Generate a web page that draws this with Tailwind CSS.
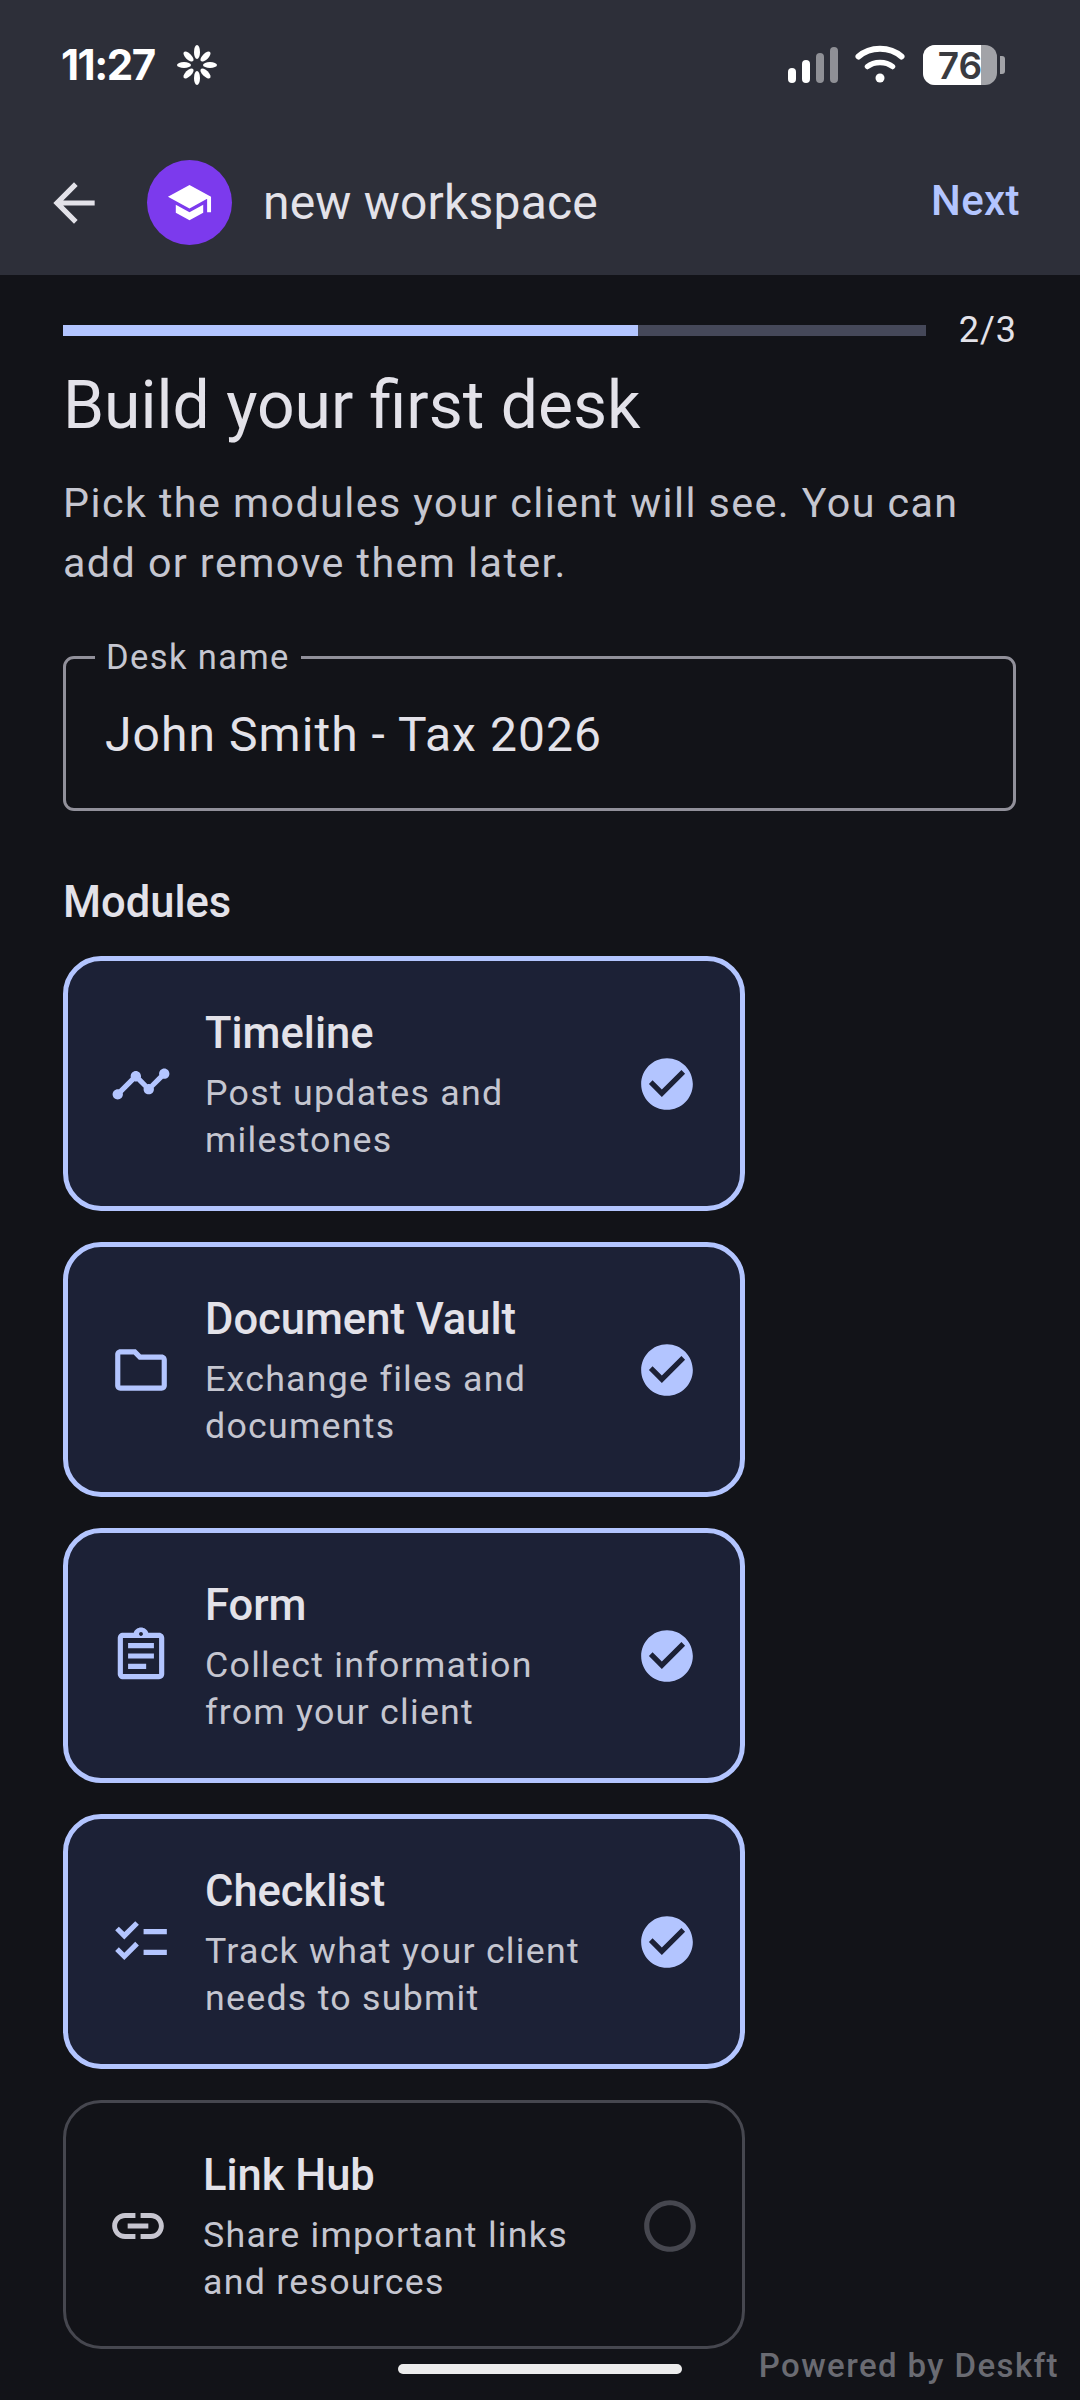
<!DOCTYPE html>
<html lang="en">
<head>
    <meta charset="UTF-8">
    <meta name="viewport" content="width=device-width, initial-scale=1.0">
    <title>new workspace</title>
    <script src="https://cdn.jsdelivr.net/npm/@tailwindcss/browser@4"></script>
</head>
<body class="bg-[#121318] font-['Roboto',sans-serif]">
<div class="relative w-[1080px] h-[2400px] overflow-hidden bg-[#121318] text-[#e3e2e9]">
    <!-- Header -->
    <header class="bg-[#2d2f39] h-[275px]">
        <div class="h-[130px] flex items-center justify-between pl-[61px] pr-[75px]">
            <div class="flex items-center gap-[22px]">
                <span class="font-['Inter',sans-serif] font-bold text-[42px] leading-none tracking-[-1.500px] text-white">11:27</span>
                <svg class="w-[40px] h-[40px]" viewBox="0 0 40 40" fill="#fff">
                    <ellipse cx="20" cy="7" rx="3" ry="7"/>
                    <ellipse cx="20" cy="33" rx="3" ry="7"/>
                    <ellipse cx="7" cy="20" rx="7" ry="3"/>
                    <ellipse cx="33" cy="20" rx="7" ry="3"/>
                    <ellipse cx="20" cy="8" rx="3" ry="6.500" transform="rotate(45 20 20)"/>
                    <ellipse cx="20" cy="32" rx="3" ry="6.500" transform="rotate(45 20 20)"/>
                    <ellipse cx="8" cy="20" rx="6.500" ry="3" transform="rotate(45 20 20)"/>
                    <ellipse cx="32" cy="20" rx="6.500" ry="3" transform="rotate(45 20 20)"/>
                </svg>
            </div>
            <div class="flex items-center">
                <svg class="w-[118px] h-[40px]" viewBox="0 0 118 40">
                    <rect x="0" y="23" width="8" height="15" rx="4" fill="#fff"/>
                    <rect x="14" y="15" width="8" height="23" rx="4" fill="#fff"/>
                    <rect x="28" y="8" width="8" height="30" rx="4" fill="#8f9096"/>
                    <rect x="42" y="2" width="8" height="36" rx="4" fill="#8f9096"/>
                    <path d="M70.500 11.500 C 82 1 102 1 113.500 11.500" fill="none" stroke="#fff" stroke-width="6" stroke-linecap="round"/>
                    <path d="M79.500 21.500 C 86 16 98 16 104.500 21.500" fill="none" stroke="#fff" stroke-width="5.500" stroke-linecap="round"/>
                    <circle cx="92" cy="33" r="4.500" fill="#fff"/>
                </svg>
                <div class="relative ml-[17px] w-[74px] h-[40px] rounded-[12px] bg-[#a2a3a8]">
                    <div class="absolute inset-y-0 left-0 w-[58px] rounded-l-[12px] bg-white"></div>
                    <span class="absolute inset-0 flex items-center justify-center font-['Inter',sans-serif] font-semibold text-[37px] leading-none text-[#3a3b40]">76</span>
                </div>
                <div class="ml-[3px] w-[5px] h-[18px] rounded-r-[3px] bg-[#a2a3a8]"></div>
            </div>
        </div>
        <div class="h-[145px] flex items-center pl-[43px] pr-[60px]">
            <svg class="w-[62px] h-[62px] shrink-0" viewBox="0 0 24 24" fill="#e3e2e9"><path d="M20 11H7.830l5.590-5.590L12 4l-8 8 8 8 1.410-1.410L7.830 13H20v-2z"/></svg>
            <div class="ml-[42px] w-[85px] h-[85px] rounded-full bg-[#7c3aed] flex items-center justify-center shrink-0">
                <svg class="w-[47px] h-[47px]" viewBox="0 0 24 24" fill="#fff"><path d="M5 13.180v4L12 21l7-3.820v-4L12 17l-7-3.820zM12 3L1 9l11 6 9-4.910V17h2V9L12 3z"/></svg>
            </div>
            <h1 class="ml-[31px] text-[48px] leading-none tracking-[0.200px] text-[#e3e2e9]">new workspace</h1>
            <button class="ml-auto pb-[3px] text-[42px] leading-none font-medium tracking-[0.400px] text-[#b3c5ff]">Next</button>
        </div>
    </header>

    <main class="px-[63px]">
        <!-- Progress -->
        <div class="flex items-center h-[80px] pt-[30px]">
            <div class="w-[863px] h-[11px] bg-[#454859]">
                <div class="h-full bg-[#b3c5ff]" style="width: 66.66%"></div>
            </div>
            <span class="ml-auto text-[36px] leading-none tracking-[1px] text-[#e3e2e9]">2/3</span>
        </div>

        <h2 class="mt-[11px] text-[66px] leading-[80px] text-[#e3e2e9]">Build your first desk</h2>
        <p class="mt-[27px] text-[41.250px] leading-[60px] tracking-[1.420px] text-[#c5c6d0] w-[953px]">Pick the modules your client will see. You can<br>add or remove them later.</p>

        <!-- Desk name -->
        <div class="relative mt-[63px] w-[953px] h-[155px] border-[3px] border-[#91909a] rounded-[11px] flex items-center pl-[39px] pt-[2px]">
            <span class="absolute left-[29px] -top-[22px] px-[11px] bg-[#121318] text-[34.500px] leading-[40px] tracking-[1.400px] text-[#c5c6d0]">Desk name</span>
            <span class="text-[48px] leading-none tracking-[1.050px] text-[#e3e2e9]">John Smith - Tax 2026</span>
        </div>

        <h3 class="mt-[67px] text-[43.500px] leading-[50px] font-medium text-[#e3e2e9]">Modules</h3>

        <!-- Module cards -->
        <div class="mt-[28px] flex flex-col gap-[31px]">
            <div class="w-[682px] border-[5px] border-[#b3c5ff] bg-[#1c2136] rounded-[38px] flex items-center px-[42px] pt-[43px] pb-[42px]">
                <svg class="w-[62px] h-[62px] shrink-0" viewBox="0 0 24 24" fill="#b3c5ff"><path d="M23 8c0 1.100-.9 2-2 2-.18 0-.35-.02-.51-.07l-3.560 3.550c.05.16.07.34.07.52 0 1.100-.9 2-2 2s-2-.9-2-2c0-.18.02-.36.07-.52l-2.550-2.550c-.16.05-.34.07-.52.07s-.36-.02-.52-.07l-4.550 4.560c.05.16.07.33.07.51 0 1.100-.9 2-2 2s-2-.9-2-2 .9-2 2-2c.18 0 .35.02.51.07l4.560-4.550C8.020 9.360 8 9.180 8 9c0-1.100.9-2 2-2s2 .9 2 2c0 .18-.02.36-.07.52l2.550 2.550c.16-.05.34-.07.52-.07s.36.02.52.07l3.550-3.560C19.020 8.350 19 8.180 19 8c0-1.100.9-2 2-2s2 .9 2 2z"/></svg>
                <div class="ml-[33px] flex-1 min-w-0">
                    <div class="text-[43.500px] leading-[60px] font-medium text-[#e3e2e9]">Timeline</div>
                    <div class="mt-[6px] text-[35.750px] leading-[47px] tracking-[1.250px] text-[#c5c6d0]">Post updates and<br>milestones</div>
                </div>
                <svg class="w-[62px] h-[62px] shrink-0" viewBox="0 0 24 24" fill="#b3c5ff"><path d="M12 2C6.480 2 2 6.480 2 12s4.480 10 10 10 10-4.480 10-10S17.520 2 12 2zm-2 15l-5-5 1.410-1.410L10 14.170l7.590-7.590L19 8l-9 9z"/></svg>
            </div>
            <div class="w-[682px] border-[5px] border-[#b3c5ff] bg-[#1c2136] rounded-[38px] flex items-center px-[42px] pt-[43px] pb-[42px]">
                <svg class="w-[62px] h-[62px] shrink-0" viewBox="0 0 24 24" fill="#b3c5ff"><path d="M9.170 6l2 2H20v10H4V6h5.170M10 4H4c-1.100 0-1.990.9-1.990 2L2 18c0 1.100.9 2 2 2h16c1.100 0 2-.9 2-2V8c0-1.100-.9-2-2-2h-8l-2-2z"/></svg>
                <div class="ml-[33px] flex-1 min-w-0">
                    <div class="text-[43.500px] leading-[60px] font-medium text-[#e3e2e9]">Document Vault</div>
                    <div class="mt-[6px] text-[35.750px] leading-[47px] tracking-[1.250px] text-[#c5c6d0]">Exchange files and<br>documents</div>
                </div>
                <svg class="w-[62px] h-[62px] shrink-0" viewBox="0 0 24 24" fill="#b3c5ff"><path d="M12 2C6.480 2 2 6.480 2 12s4.480 10 10 10 10-4.480 10-10S17.520 2 12 2zm-2 15l-5-5 1.410-1.410L10 14.170l7.590-7.590L19 8l-9 9z"/></svg>
            </div>
            <div class="w-[682px] border-[5px] border-[#b3c5ff] bg-[#1c2136] rounded-[38px] flex items-center px-[42px] pt-[43px] pb-[42px]">
                <svg class="w-[62px] h-[62px] shrink-0" viewBox="0 0 24 24" fill="#b3c5ff"><path d="M7 15h7v2H7zm0-4h10v2H7zm0-4h10v2H7zm12-4h-4.180C14.400 1.840 13.300 1 12 1c-1.300 0-2.400.84-2.820 2H5c-.14 0-.27.01-.4.04-.39.08-.74.28-1.010.55-.18.18-.33.4-.43.64-.1.23-.16.49-.16.77v14c0 .27.06.54.16.78s.25.45.43.64c.27.27.62.47 1.010.55.13.02.26.03.4.03h14c1.100 0 2-.9 2-2V5c0-1.100-.9-2-2-2zm-7-.25c.41 0 .75.34.75.75s-.34.75-.75.75-.75-.34-.75-.75.34-.75.75-.75zM19 19H5V5h14v14z"/></svg>
                <div class="ml-[33px] flex-1 min-w-0">
                    <div class="text-[43.500px] leading-[60px] font-medium text-[#e3e2e9]">Form</div>
                    <div class="mt-[6px] text-[35.750px] leading-[47px] tracking-[1.250px] text-[#c5c6d0]">Collect information<br>from your client</div>
                </div>
                <svg class="w-[62px] h-[62px] shrink-0" viewBox="0 0 24 24" fill="#b3c5ff"><path d="M12 2C6.480 2 2 6.480 2 12s4.480 10 10 10 10-4.480 10-10S17.520 2 12 2zm-2 15l-5-5 1.410-1.410L10 14.170l7.590-7.590L19 8l-9 9z"/></svg>
            </div>
            <div class="w-[682px] border-[5px] border-[#b3c5ff] bg-[#1c2136] rounded-[38px] flex items-center px-[42px] pt-[43px] pb-[42px]">
                <svg class="w-[62px] h-[62px] shrink-0" viewBox="0 0 24 24" fill="#b3c5ff"><path d="M22 7h-9v2h9V7zm0 8h-9v2h9v-2zM5.540 11L2 7.460l1.410-1.410 2.120 2.120 4.240-4.240 1.410 1.410L5.540 11zm0 8L2 15.460l1.410-1.410 2.120 2.120 4.240-4.240 1.410 1.410L5.540 19z"/></svg>
                <div class="ml-[33px] flex-1 min-w-0">
                    <div class="text-[43.500px] leading-[60px] font-medium text-[#e3e2e9]">Checklist</div>
                    <div class="mt-[6px] text-[35.750px] leading-[47px] tracking-[1.250px] text-[#c5c6d0]">Track what your client<br>needs to submit</div>
                </div>
                <svg class="w-[62px] h-[62px] shrink-0" viewBox="0 0 24 24" fill="#b3c5ff"><path d="M12 2C6.480 2 2 6.480 2 12s4.480 10 10 10 10-4.480 10-10S17.520 2 12 2zm-2 15l-5-5 1.410-1.410L10 14.170l7.590-7.590L19 8l-9 9z"/></svg>
            </div>
            <div class="w-[682px] border-[3px] border-[#46474f] rounded-[38px] flex items-center px-[41px] pt-[43px] pb-[40px]">
                <svg class="w-[62px] h-[62px] shrink-0" viewBox="0 0 24 24" fill="#c7c6d0"><path d="M3.900 12c0-1.710 1.390-3.100 3.100-3.100h4V7H7c-2.760 0-5 2.240-5 5s2.240 5 5 5h4v-1.900H7c-1.710 0-3.100-1.390-3.100-3.100zM8 13h8v-2H8v2zm9-6h-4v1.900h4c1.710 0 3.100 1.390 3.100 3.100s-1.390 3.100-3.100 3.100h-4V17h4c2.760 0 5-2.240 5-5s-2.240-5-5-5z"/></svg>
                <div class="ml-[34px] flex-1 min-w-0">
                    <div class="text-[43.500px] leading-[60px] font-medium text-[#e3e2e9]">Link Hub</div>
                    <div class="mt-[6px] text-[35.750px] leading-[47px] tracking-[1.250px] text-[#c5c6d0]">Share important links<br>and resources</div>
                </div>
                <svg class="w-[62px] h-[62px] shrink-0" viewBox="0 0 24 24" fill="#46474f"><path d="M12 2C6.480 2 2 6.480 2 12s4.480 10 10 10 10-4.480 10-10S17.520 2 12 2zm0 18c-4.420 0-8-3.580-8-8s3.580-8 8-8 8 3.580 8 8-3.580 8-8 8z"/></svg>
            </div>
        </div>
    </main>

    <!-- Footer overlays -->
    <span class="absolute right-[21px] bottom-[12px] text-[33px] leading-[44px] font-medium tracking-[1.400px] text-[#6a6b72]">Powered by Deskft</span>
    <div class="absolute left-[398px] top-[2364px] w-[284px] h-[10px] rounded-full bg-[#ececec]"></div>
</div>
</body>
</html>
